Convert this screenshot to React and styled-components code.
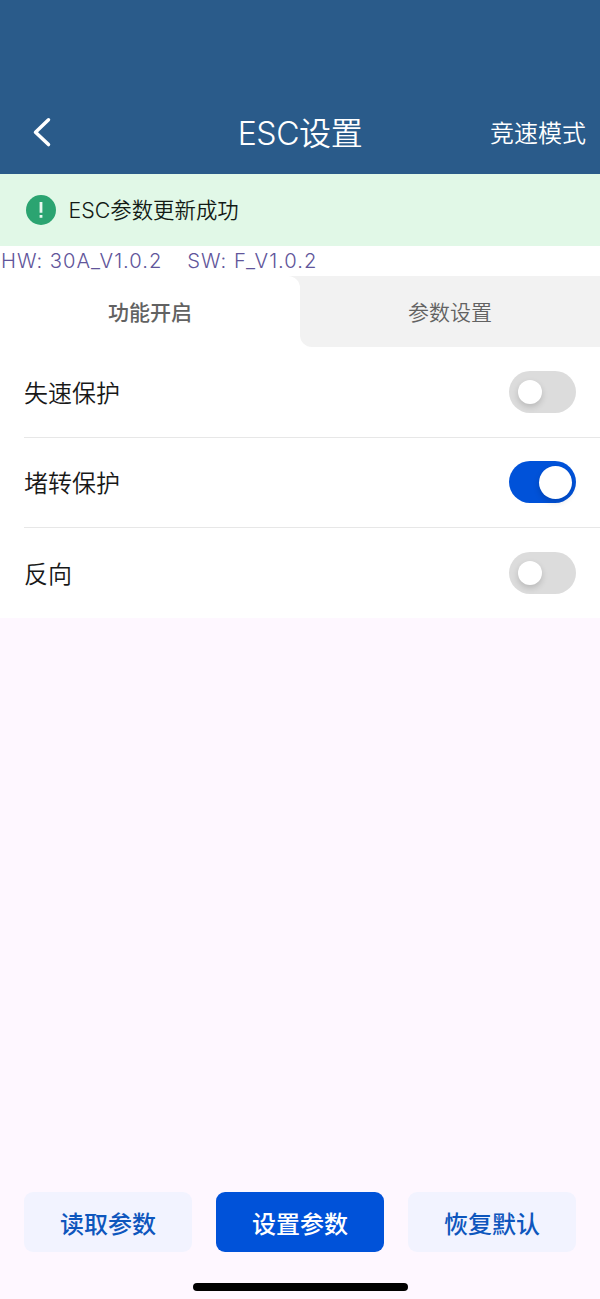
import { useState } from "react";
import styled, { createGlobalStyle } from "styled-components";

const GlobalStyle = createGlobalStyle`
  * {
    box-sizing: border-box;
  }

  body {
    margin: 0;
    font-family: Inter, "Noto Sans CJK SC", sans-serif;
  }

  button {
    padding: 0;
    border: none;
    background: none;
    font-family: inherit;
    cursor: pointer;
  }
`;

const Page = styled.div`
  display: flex;
  flex-direction: column;
  height: 1299px;
  background-color: #fef7ff;
  overflow: hidden;
`;

const Header = styled.header`
  display: grid;
  grid-template-columns: 1fr auto 1fr;
  align-items: center;
  height: 174px;
  padding: 90px 14px 0;
  background-color: #2a5b8a;
  color: #fff;
`;

const BackButton = styled.button`
  width: 24px;
  height: 32px;
  margin-left: 16px;
  color: #fff;

  svg {
    display: block;
  }
`;

const Title = styled.h1`
  margin: 0;
  padding-top: 4px;
  font-size: 32px;
  font-weight: 350;
  line-height: 40px;
  letter-spacing: -0.4px;
`;

const Mode = styled.button`
  justify-self: end;
  padding-top: 4px;
  color: #fff;
  font-size: 24px;
  font-weight: 350;
  line-height: 32px;
`;

const Notice = styled.div`
  display: flex;
  align-items: center;
  gap: 13px;
  height: 72px;
  padding-left: 25.5px;
  background-color: #e1f8e7;
  color: #131a15;
  font-size: 21.4px;
  font-weight: 350;

  span {
    padding-bottom: 4px;
  }
`;

const Versions = styled.div`
  display: flex;
  gap: 25px;
  height: 30px;
  padding-left: 1px;
  background-color: #fff;
  color: #61559a;
  font-size: 20.2px;
  line-height: 30px;
  font-weight: 350;
  letter-spacing: 1px;
`;

const Tabs = styled.div`
  display: grid;
  grid-template-columns: 1fr 1fr;
  height: 71px;
  background: linear-gradient(to bottom, #f2f2f2 50%, #fff 50%);
`;

const Tab = styled.button`
  padding-bottom: 1px;
  border-radius: ${({ $active }) => ($active ? "0 12px 0 0" : "0 0 0 12px")};
  background-color: ${({ $active }) => ($active ? "#fff" : "#f2f2f2")};
  color: #626262;
  font-size: 21px;
  font-weight: ${({ $active }) => ($active ? 500 : 350)};
`;

const List = styled.div`
  height: 271px;
  padding-left: 24px;
  background-color: #fff;
`;

const Row = styled.div`
  display: flex;
  align-items: center;
  justify-content: space-between;
  height: 90px;
  padding-right: 24px;
  color: #181818;
  font-size: 24px;
  font-weight: 350;

  span {
    margin-bottom: 1px;
  }

  & + & {
    border-top: 1px solid #e7e7e7;
  }

  &:nth-child(2) {
    padding-bottom: 1px;
  }

  &:last-child {
    height: 91px;
  }
`;

const Switch = styled.button`
  display: flex;
  align-items: center;
  justify-content: ${({ $on }) => ($on ? "flex-end" : "flex-start")};
  width: 67px;
  height: 42px;
  padding: ${({ $on }) => ($on ? "0 4px" : "0 9px")};
  border-radius: 21px;
  background-color: ${({ $on }) => ($on ? "#0052d9" : "#dcdcdc")};
`;

const Knob = styled.i`
  width: ${({ $on }) => ($on ? 33 : 24)}px;
  height: ${({ $on }) => ($on ? 33 : 24)}px;
  border-radius: 50%;
  background-color: #fff;
  box-shadow: 0 3px 6px rgba(0, 0, 0, 0.16);
`;

const Actions = styled.div`
  display: grid;
  grid-template-columns: repeat(3, 1fr);
  gap: 24px;
  margin-top: auto;
  padding: 0 24px;
`;

const ActionButton = styled.button`
  height: 60px;
  border-radius: 9px;
  background-color: ${({ $primary }) => ($primary ? "#0052d9" : "#f2f3ff")};
  color: ${({ $primary }) => ($primary ? "#fff" : "#0e56bd")};
  font-size: 24px;
  font-weight: 500;
`;

const HomeIndicator = styled.div`
  flex-shrink: 0;
  width: 215px;
  height: 8px;
  margin: 31px auto 8px;
  border-radius: 4px;
  background-color: #000;
`;

const options = [
  { key: "stall", label: "失速保护", on: false },
  { key: "lock", label: "堵转保护", on: true },
  { key: "reverse", label: "反向", on: false },
];

const App = () => {
  const [tab, setTab] = useState(0);
  const [items, setItems] = useState(options);

  const toggle = (key) => {
    setItems(items.map((i) => (i.key === key ? { ...i, on: !i.on } : i)));
  };

  return (
    <>
      <GlobalStyle />
      <Page>
        <Header>
          <BackButton aria-label="返回">
            <svg width="24" height="32" viewBox="0 0 24 32" fill="none">
              <path
                d="M18.5 3.8 5.5 16.2 18.5 28.6"
                stroke="currentColor"
                strokeWidth="3.5"
                strokeLinecap="round"
                strokeLinejoin="round"
              />
            </svg>
          </BackButton>
          <Title>ESC设置</Title>
          <Mode>竞速模式</Mode>
        </Header>
        <Notice>
          <svg width="30" height="30" viewBox="0 0 30 30">
            <circle cx="15" cy="15" r="15" fill="#2ba471" />
            <path d="M13.6 7h2.8v10.8h-2.8zM13.6 20h2.8v2.8h-2.8z" fill="#e9f8ef" />
          </svg>
          <span>ESC参数更新成功</span>
        </Notice>
        <Versions>
          <span>HW: 30A_V1.0.2</span>
          <span>SW: F_V1.0.2</span>
        </Versions>
        <Tabs>
          <Tab $active={tab === 0} onClick={() => setTab(0)}>
            功能开启
          </Tab>
          <Tab $active={tab === 1} onClick={() => setTab(1)}>
            参数设置
          </Tab>
        </Tabs>
        <List>
          {items.map((item) => (
            <Row key={item.key}>
              <span>{item.label}</span>
              <Switch $on={item.on} aria-label={item.label} onClick={() => toggle(item.key)}>
                <Knob $on={item.on} />
              </Switch>
            </Row>
          ))}
        </List>
        <Actions>
          <ActionButton>读取参数</ActionButton>
          <ActionButton $primary>设置参数</ActionButton>
          <ActionButton>恢复默认</ActionButton>
        </Actions>
        <HomeIndicator />
      </Page>
    </>
  );
};

export default App;
